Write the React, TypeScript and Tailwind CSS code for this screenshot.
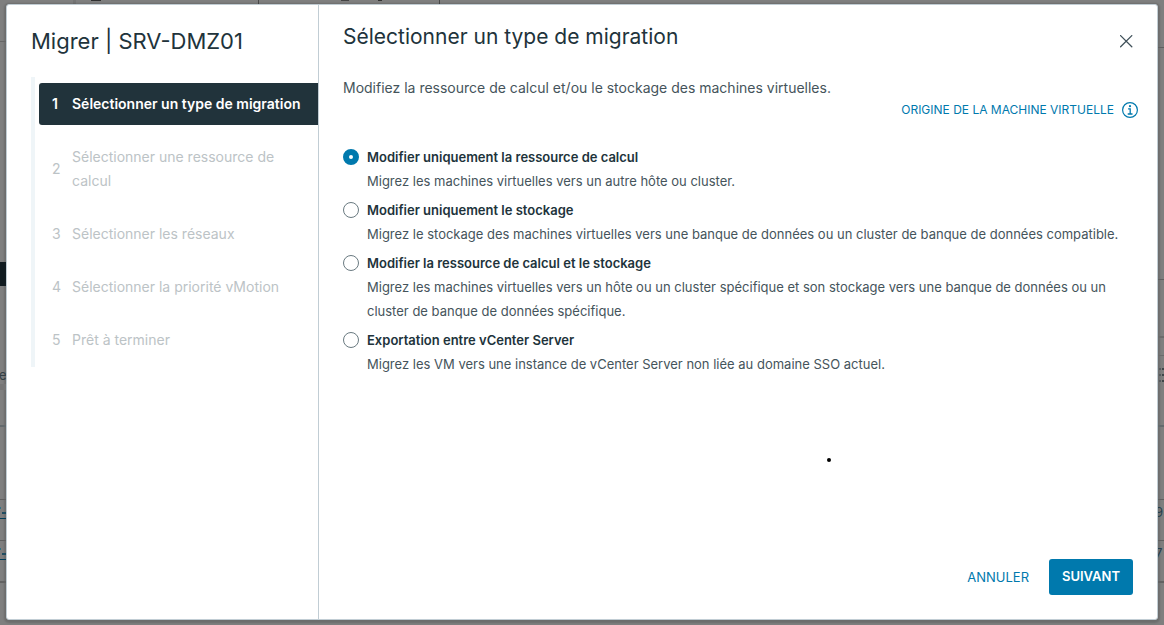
import { useState } from "react";

const steps = [
  "Sélectionner un type de migration",
  "Sélectionner une ressource de calcul",
  "Sélectionner les réseaux",
  "Sélectionner la priorité vMotion",
  "Prêt à terminer",
];

const options = [
  {
    id: "compute",
    title: "Modifier uniquement la ressource de calcul",
    text: "Migrez les machines virtuelles vers un autre hôte ou cluster.",
  },
  {
    id: "storage",
    title: "Modifier uniquement le stockage",
    text: "Migrez le stockage des machines virtuelles vers une banque de données ou un cluster de banque de données compatible.",
  },
  {
    id: "both",
    title: "Modifier la ressource de calcul et le stockage",
    text: "Migrez les machines virtuelles vers un hôte ou un cluster spécifique et son stockage vers une banque de données ou un cluster de banque de données spécifique.",
  },
  {
    id: "export",
    title: "Exportation entre vCenter Server",
    text: "Migrez les VM vers une instance de vCenter Server non liée au domaine SSO actuel.",
  },
];

function LeftEdge() {
  return (
    <div className="relative w-[6px] shrink-0 overflow-hidden text-[13px] leading-4" aria-hidden="true">
      <div className="absolute top-[37px] h-px w-full bg-[#666]" />
      <div className="absolute top-[258px] h-6 w-full bg-[#111b20]" />
      <div className="absolute top-[363px] -left-px text-[#333f45]">e</div>
      <div className="absolute top-[380px] h-[6px] w-full bg-[#767676]" />
      <div className="absolute top-[421px] h-[2px] w-full bg-[#646a6d]" />
      <div className="absolute top-[495px] h-px w-full bg-[#5f5f5f]" />
      <div className="absolute top-[503px] h-[2px] w-px bg-[#2f7387]" />
      <div className="absolute top-[508px] left-[2px] h-[2px] w-1 bg-[#1f4c60]" />
      <div className="absolute top-[514px] h-px w-full bg-[#003d59]" />
      <div className="absolute top-[536px] h-px w-full bg-[#5f5f5f]" />
      <div className="absolute top-[544px] h-[2px] w-px bg-[#2f7387]" />
      <div className="absolute top-[549px] left-[2px] h-[2px] w-1 bg-[#1f4c60]" />
      <div className="absolute top-[555px] h-px w-full bg-[#003d59]" />
      <div className="absolute top-[577px] h-[2px] w-full bg-[#626262]" />
    </div>
  );
}

function RightEdge() {
  return (
    <div className="relative w-[6px] shrink-0 overflow-hidden text-[13px] leading-4" aria-hidden="true">
      <div className="absolute top-[43px] h-px w-full bg-[#5f5f5f]" />
      <div className="absolute top-[275px] h-px w-full bg-[#5f5f5f]" />
      <div className="absolute top-[332px] h-[2px] w-full bg-[#6b6b6b]" />
      <div className="absolute top-[351px] h-px w-full bg-[#6b6b6b]" />
      <div className="absolute top-[364px] left-px flex h-[14px] w-[5px] flex-col justify-between">
        {[0, 1, 2].map((row) => (
          <div key={row} className="flex justify-between">
            <span className="size-[2px] bg-[#555b5e]" />
            <span className="size-[2px] bg-[#3f4649]" />
          </div>
        ))}
      </div>
      <div className="absolute top-[421px] h-[2px] w-full bg-[#646a6d]" />
      <div className="absolute top-[495px] h-px w-full bg-[#5f5f5f]" />
      <div className="absolute top-[500px] -left-[3px] text-[#27404c]">9</div>
      <div className="absolute top-[536px] h-px w-full bg-[#5f5f5f]" />
      <div className="absolute top-[541px] -left-[3px] text-[#27404c]">7</div>
      <div className="absolute top-[577px] h-[2px] w-full bg-[#626262]" />
    </div>
  );
}

export default function App() {
  const [choice, setChoice] = useState("compute");
  return (
    <div className="flex min-h-screen flex-col bg-[#7f7f7f] font-['Inter','Noto_Sans',sans-serif] text-[#21333b]">
      <div className="flex h-1 shrink-0 items-start" aria-hidden="true">
        <div className="ml-[73px] h-1 w-[3px] bg-[#757575]" />
        <div className="ml-[15px] h-px w-[10px] bg-[#303030]" />
        <div className="ml-[157px] h-1 w-px bg-[#4a4a4a]" />
        <div className="ml-[82px] h-px w-2 bg-[#444]" />
        <div className="ml-[29px] h-px w-1 bg-[#333]" />
        <div className="ml-[57px] h-1 w-px bg-[#4a4a4a]" />
      </div>
      <div className="flex grow">
        <LeftEdge />
        <div
          role="dialog"
          aria-label="Migrer | SRV-DMZ01"
          className="flex min-w-0 grow rounded-[3px] border border-[#c1cdd4] bg-white shadow-[0_1px_2px_2px_rgba(0,0,0,0.15)]"
        >
          <aside className="w-[312px] shrink-0 border-r border-[#c1cdd4] pl-6">
            <h1 className="pt-5 text-[22px] leading-8">Migrer | SRV-DMZ01</h1>
            <ol className="mt-5 border-l-4 border-[#eff5f8] pt-[6px] pb-[6px]">
              {steps.map((step, i) => (
                <li key={step} className={i === 0 ? "" : "mt-[11px]"}>
                  <button
                    type="button"
                    disabled={i > 0}
                    className={
                      i === 0
                        ? "ml-1 flex w-[calc(100%-4px)] items-center rounded-l-[3px] bg-[#21333b] py-[9px] pl-[13px] text-left text-sm leading-6 font-semibold text-white"
                        : "ml-1 flex w-[calc(100%-4px)] items-center py-[9px] pr-8 pl-[13px] text-left text-sm leading-6 text-[#bcc3c6]"
                    }
                  >
                    <span className="w-5 shrink-0">{i + 1}</span>
                    <span>{step}</span>
                  </button>
                </li>
              ))}
            </ol>
          </aside>
          <main className="flex min-w-0 grow flex-col px-6">
            <header className="flex items-start justify-between pt-5">
              <h2 className="text-[21px] leading-6">Sélectionner un type de migration</h2>
              <button type="button" aria-label="Fermer" className="mt-[10px]">
                <svg width="13" height="13" viewBox="0 0 13 13" fill="none" stroke="#3f5059" strokeWidth="1.3" strokeLinecap="round">
                  <path d="M.6.6l11.2 11.2M11.8.6L.6 11.8" />
                </svg>
              </button>
            </header>
            <p className="mt-[27px] text-sm leading-6 text-[#45545b]">
              Modifiez la ressource de calcul et/ou le stockage des machines virtuelles.
            </p>
            <div className="-mr-[5px] flex h-5 items-center justify-end">
              <button type="button" className="flex items-center gap-2 text-xs leading-5 text-[#0079ad]">
                ORIGINE DE LA MACHINE VIRTUELLE
                <svg width="16" height="16" viewBox="0 0 16 16" fill="none" stroke="#0079ad">
                  <circle cx="8" cy="8" r="7.4" strokeWidth="1.2" />
                  <path d="M6.1 6.8h2.1v5M5.7 12h4.8" strokeWidth="1.3" />
                  <circle cx="8" cy="4.2" r="1.1" fill="#0079ad" stroke="none" />
                </svg>
              </button>
            </div>
            <fieldset aria-label="Type de migration" className="mt-[25px] flex flex-col gap-[5px]">
              {options.map((o) => (
                <div key={o.id} className="grid grid-cols-[16px_1fr] gap-x-2">
                  <input
                    type="radio"
                    id={o.id}
                    name="migration"
                    checked={choice === o.id}
                    onChange={() => setChoice(o.id)}
                    className="mt-1 size-4 appearance-none rounded-full border border-[#6a7a81] checked:border-[6px] checked:border-[#0079ad]"
                  />
                  <label htmlFor={o.id} className="text-[13px] leading-6 font-semibold">
                    {o.title}
                  </label>
                  <p className="col-start-2 text-[13px] leading-6 text-[#45545b]">{o.text}</p>
                </div>
              ))}
            </fieldset>
            <div className="mt-[82px] flex justify-center" aria-hidden="true">
              <span className="ml-[182px] size-1 rounded-full bg-black" />
            </div>
            <footer className="mt-auto flex justify-end gap-5 pb-6">
              <button type="button" className="text-[13px] leading-9 text-[#0079ad]">
                ANNULER
              </button>
              <button type="button" className="h-9 w-[84px] rounded-[3px] bg-[#0079ad] text-[13px] font-semibold text-white">
                SUIVANT
              </button>
            </footer>
          </main>
        </div>
        <RightEdge />
      </div>
      <div className="h-[5px] shrink-0" />
    </div>
  );
}
